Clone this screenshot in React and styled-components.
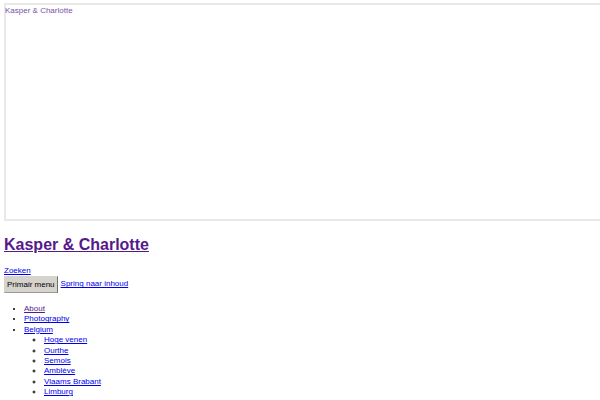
import React from 'react'
import styled, { createGlobalStyle } from 'styled-components'

const GlobalStyle = createGlobalStyle`
  html, body {
    margin: 0;
    background: #fff;
    overflow: hidden;
  }
  body {
    font-family: "Liberation Sans", Arial, sans-serif;
    font-size: 8px;
    line-height: 10.4px;
    color: #000;
  }
`;

const Page = styled.div`
  padding: 3px 0 0 4px;
`;

const Banner = styled.a`
  display: block;
  box-sizing: border-box;
  height: 218px;
  border: 2px solid #e9e9e9;
  border-right: none;
  padding: 1px 0 0;
  text-indent: -1px;
  color: #7a52a8;
  text-decoration: none;
`;

const SiteTitle = styled.h1`
  margin: 15px 0 11px;
  font-size: 16px;
  line-height: 18.5px;
  font-weight: bold;
  a {
    color: #551a8b;
  }
`;

const Link = styled.a`
  color: ${p => (p.$visited ? '#551a8b' : '#0000ee')};
  text-decoration: underline;
`;

const Search = styled.div`
  margin: 0;
`;

const NavBar = styled.div`
  display: flex;
  align-items: center;
  gap: 3px;
`;

const MenuButton = styled.button`
  font-family: "Liberation Sans", Arial, sans-serif;
  font-size: 8px;
  font-weight: normal;
  height: 17px;
  padding: 0 2px;
  margin: 0;
  background: #d6d3cd;
  border: 1px solid #d6d3cd;
  border-right: 1px solid #707070;
  border-bottom: 1px solid #9a9a9a;
  color: #000;
`;

const Menu = styled.ul`
  margin: 11px 0 0;
  padding-left: 20px;
  list-style: disc;
  ul {
    margin: 0;
    padding-left: 20px;
    list-style: circle;
  }
`;

const regions = ['Hoge venen', 'Ourthe', 'Semois', 'Amblève', 'Vlaams Brabant', 'Limburg']

export default function App() {
  return (
    <>
      <GlobalStyle />
      <Page>
        <Banner href="#">Kasper &amp; Charlotte</Banner>
        <SiteTitle>
          <a href="#">Kasper &amp; Charlotte</a>
        </SiteTitle>
        <Search>
          <Link href="#">Zoeken</Link>
        </Search>
        <NavBar>
          <MenuButton>Primair menu</MenuButton>
          <Link href="#">Spring naar inhoud</Link>
        </NavBar>
        <Menu>
          <li><Link href="#" $visited>About</Link></li>
          <li><Link href="#">Photography</Link></li>
          <li>
            <Link href="#">Belgium</Link>
            <ul>
              {regions.map(r => (
                <li key={r}><Link href="#">{r}</Link></li>
              ))}
            </ul>
          </li>
          <li><Link href="#">France</Link></li>
        </Menu>
      </Page>
    </>
  )
}
